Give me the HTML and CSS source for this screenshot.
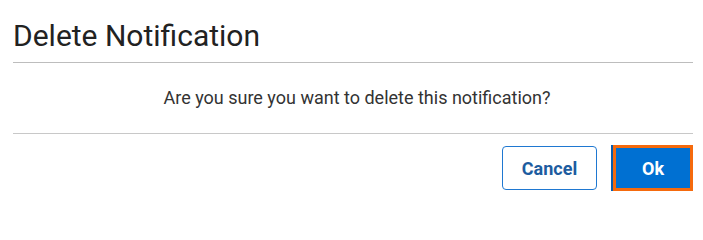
FILE: index.html
```html
<!DOCTYPE html>
<html>
<head>
<meta charset="utf-8">
<link rel="stylesheet" href="styles.css">
</head>
<body>
<div class="dialog">
  <div class="header"><h1 class="title">Delete Notification</h1></div>
  <div class="body"><p class="message">Are you sure you want to delete this notification?</p></div>
  <div class="footer">
    <button class="btn btn-cancel">Cancel</button>
    <button class="btn btn-ok">Ok</button>
  </div>
</div>
</body>
</html>
```
FILE: styles.css
```css
html, body {
  margin: 0;
  padding: 0;
  background: #ffffff;
}
body {
  font-family: Roboto, "Liberation Sans", sans-serif;
  color: #212121;
}
.dialog {
  padding: 0 10px 0 13px;
}
.header {
  height: 62px;
  border-bottom: 1px solid #bdbdbd;
  display: flex;
  align-items: flex-end;
}
.title {
  margin: 0 0 8px 0;
  font-size: 30px;
  font-weight: 400;
  line-height: 36px;
  color: #222222;
}
.body {
  height: 70px;
  border-bottom: 1px solid #c8c8c8;
  display: flex;
  align-items: center;
  justify-content: center;
}
.message {
  margin: 0 0 0 8px;
  font-size: 18px;
  line-height: 22px;
  color: #333333;
}
.footer {
  display: flex;
  justify-content: flex-end;
  align-items: flex-start;
  padding-top: 11px;
  gap: 16px;
}
.btn {
  font-family: Roboto, "Liberation Sans", sans-serif;
  font-size: 18px;
  font-weight: 700;
  cursor: pointer;
  box-sizing: border-box;
}
.btn-cancel {
  margin-top: 1px;
  width: 95px;
  height: 44px;
  background: #ffffff;
  color: #1d5c9f;
  border: 1px solid #1f78d1;
  border-radius: 4px;
}
.btn-ok {
  width: 80px;
  height: 46px;
  background: #0070d2;
  color: #ffffff;
  border: 3px solid #f56a0d;
  border-radius: 0;
  box-shadow: -2px 0 0 #0b5cae;
}
```
